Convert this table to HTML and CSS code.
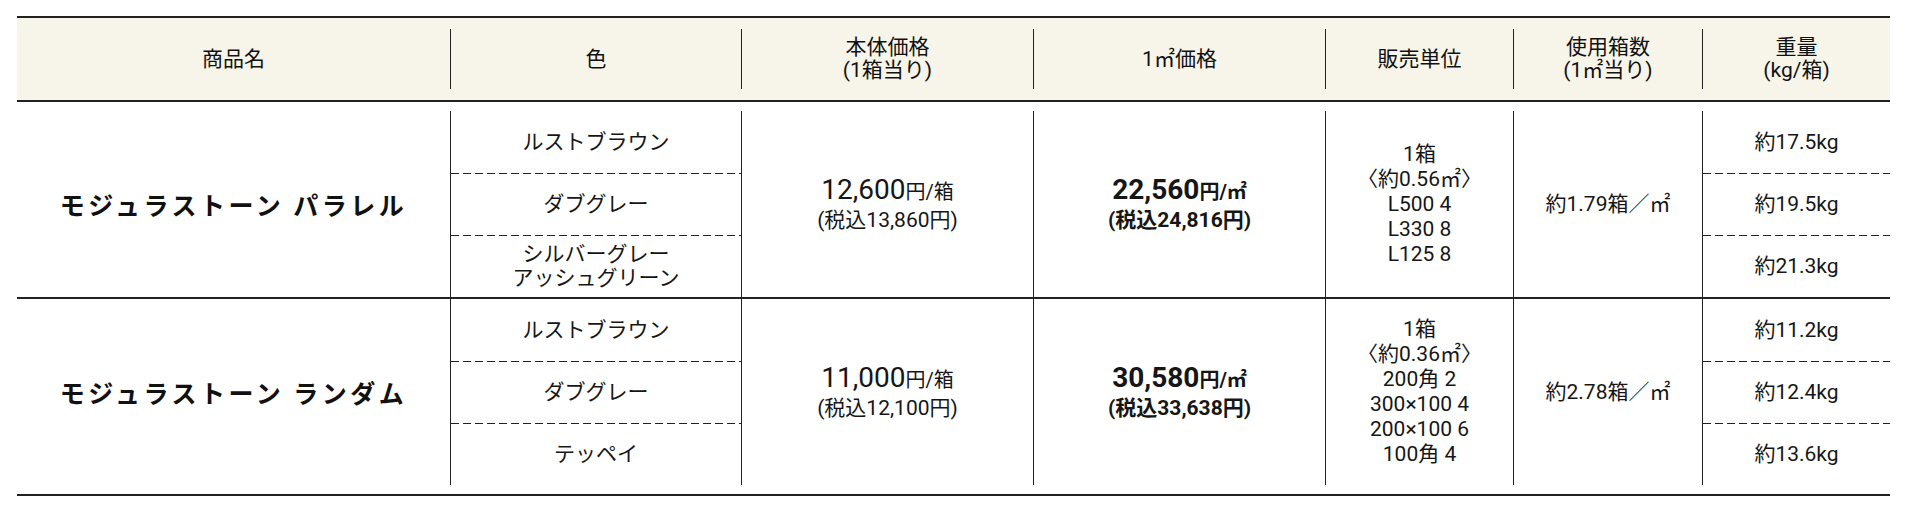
FILE: index.html
```html
<!DOCTYPE html>
<html lang="ja">
<head>
<meta charset="utf-8">
<title>モジュラストーン</title>
<link rel="stylesheet" href="styles.css">
</head>
<body>
<div class="wrap">
  <div class="spec">
    <div class="thead">
      <div class="th">商品名</div>
      <div class="th">色</div>
      <div class="th">本体価格<br>(1箱当り)</div>
      <div class="th">1㎡価格</div>
      <div class="th">販売単位</div>
      <div class="th">使用箱数<br>(1㎡当り)</div>
      <div class="th">重量<br>(kg/箱)</div>
    </div>
    <div class="tbody">
      <div class="group">
        <div class="td name">モジュラストーン パラレル</div>
        <div class="td split">
          <div class="sub">ルストブラウン</div>
          <div class="sub">ダブグレー</div>
          <div class="sub">シルバーグレー<br>アッシュグリーン</div>
        </div>
        <div class="td price">
          <div class="main"><span class="num">12,600</span>円/箱</div>
          <div class="tax">(税込13,860円)</div>
        </div>
        <div class="td price bold">
          <div class="main"><span class="num">22,560</span>円/㎡</div>
          <div class="tax">(税込24,816円)</div>
        </div>
        <div class="td unit">1箱<br>〈約0.56㎡〉<br>L500 4<br>L330 8<br>L125 8</div>
        <div class="td">約1.79箱／㎡</div>
        <div class="td split">
          <div class="sub">約17.5kg</div>
          <div class="sub">約19.5kg</div>
          <div class="sub">約21.3kg</div>
        </div>
      </div>
      <div class="group">
        <div class="td name">モジュラストーン ランダム</div>
        <div class="td split">
          <div class="sub">ルストブラウン</div>
          <div class="sub">ダブグレー</div>
          <div class="sub">テッペイ</div>
        </div>
        <div class="td price">
          <div class="main"><span class="num">11,000</span>円/箱</div>
          <div class="tax">(税込12,100円)</div>
        </div>
        <div class="td price bold">
          <div class="main"><span class="num">30,580</span>円/㎡</div>
          <div class="tax">(税込33,638円)</div>
        </div>
        <div class="td unit">1箱<br>〈約0.36㎡〉<br>200角 2<br>300×100 4<br>200×100 6<br>100角 4</div>
        <div class="td">約2.78箱／㎡</div>
        <div class="td split">
          <div class="sub">約11.2kg</div>
          <div class="sub">約12.4kg</div>
          <div class="sub">約13.6kg</div>
        </div>
      </div>
    </div>
  </div>
</div>
</body>
</html>
```

FILE: styles.css
```css
* {
  box-sizing: border-box;
  margin: 0;
  padding: 0;
}

html, body {
  background: #ffffff;
}

body {
  color: #161616;
  font-family: Roboto, "Noto Sans CJK JP", sans-serif;
  font-size: 21px;
  line-height: 24px;
}

.wrap {
  padding: 16px 16px 0 17px;
}

.spec {
  width: 1873px;
}

.thead,
.group {
  display: grid;
  grid-template-columns: 433px 291px 292px 292px 188px 189px 188px;
}

.thead {
  border-top: 2px solid #222;
  border-bottom: 2px solid #222;
  background: #f7f5e9;
  padding: 11px 0;
}

.th {
  height: 60px;
  display: flex;
  align-items: center;
  justify-content: center;
  text-align: center;
  line-height: 23px;
  font-weight: 400;
  color: #111;
}

.th + .th {
  border-left: 1px solid #222;
}

.tbody {
  padding: 9px 0;
  border-bottom: 2px solid #222;
}

.group {
  height: 186px;
}

.group + .group {
  height: 188px;
  border-top: 2px solid #222;
}

.td {
  display: flex;
  flex-direction: column;
  align-items: center;
  justify-content: center;
  text-align: center;
}

.td + .td {
  border-left: 1px solid #222;
}

.name {
  font-family: "Noto Sans CJK JP", sans-serif;
  font-size: 25px;
  font-weight: 700;
  letter-spacing: 3.5px;
  color: #111;
}

.split {
  align-items: stretch;
  justify-content: stretch;
}

.sub {
  flex: 1;
  display: flex;
  align-items: center;
  justify-content: center;
  text-align: center;
}

.sub + .sub {
  background-image: repeating-linear-gradient(90deg, #222 0 8px, transparent 8px 12px);
  background-size: 100% 1px;
  background-repeat: no-repeat;
  background-position: left top;
}

.price .main {
  font-size: 20px;
  line-height: 30px;
}

.price .num {
  font-size: 28px;
}

.price .tax {
  line-height: 26px;
}

.bold {
  font-weight: 700;
}

.unit {
  line-height: 25px;
}
```
